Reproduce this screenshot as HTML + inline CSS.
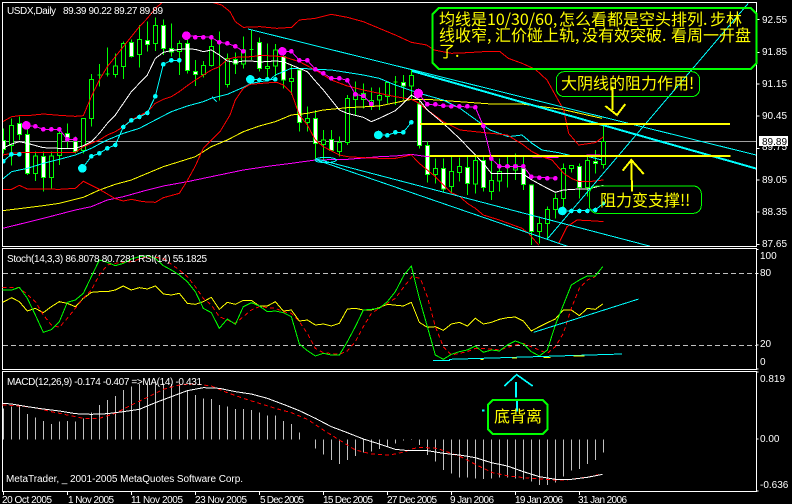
<!DOCTYPE html>
<html><head><meta charset="utf-8">
<style>
html,body{margin:0;padding:0;background:#000;width:792px;height:504px;overflow:hidden}
svg{position:absolute;left:0;top:0;display:block}
circle{stroke:none}
text{font-family:"Liberation Sans",sans-serif;font-size:10px;fill:#fff}
.c{position:absolute;white-space:pre;font-family:"WenQuanYi Zen Hei","Noto Sans CJK SC",sans-serif;font-size:16px;line-height:16px;color:#ff0;text-rendering:optimizeSpeed;font-weight:normal}
</style></head><body>
<svg width="792" height="504" viewBox="0 0 2376 1512" shape-rendering="crispEdges" fill="none" stroke-width="3">
<defs>
<clipPath id="m"><rect x="9" y="9" width="2259" height="729"/></clipPath>
</defs>
<rect width="2376" height="1512" fill="#000"/>
<!-- frames -->
<path stroke="#fff" d="M7.5 7.5H2269.5V739.5H7.5ZM7.5 745.5H2269.5V1108.5H7.5ZM7.5 1114.5H2269.5V1474.5H7.5Z"/>
<path stroke="#fff" d="M2270 58.5h9M2270 157.5h9M2270 252.5h9M2270 348.5h9M2270 445.5h9M2270 540.5h9M2270 635.5h9M2270 733.5h9M2270 748.5h6M2270 820.5h6M2270 1035.5h6M2270 1107.5h6M2270 1116.5h6M2270 1316.5h6M2270 1472.5h6"/>
<path stroke="#fff" d="M10.5 1476v9M202.5 1476v9M394.5 1476v9M586.5 1476v9M778.5 1476v9M970.5 1476v9M1162.5 1476v9M1354.5 1476v9M1546.5 1476v9M1738.5 1476v9"/>
<path stroke="#a0a0a0" d="M9 424.5H2268"/>
<path stroke="#c0c0c0" stroke-dasharray="15 9" d="M9 820.5H2268M9 1036.5H2268"/>

<g clip-path="url(#m)">
<!-- candles group 1 -->
<g stroke="#0f0">
<path d="M10.5 385V460M34.5 355V497M58.5 350V420M82.5 375V525M106.5 455V543M130.5 455V575M154.5 455V567M178.5 395V495M202.5 370V445M226.5 410V460M250.5 355V460M274.5 222V380M298.5 192V260M292.5 224.5h12M322.5 142V230M316.5 221.5h12M346.5 160V233M370.5 125V237M394.5 118V173M418.5 75V203M442.5 65V155M466.5 52V153M490.5 58V165M514.5 70V170M538.5 122V225M562.5 118V220M586.5 180V258M610.5 183V233M634.5 112V200M658.5 95V302M682.5 160V263M706.5 158V222M730.5 110V205M754.5 92V180M748.5 148.5h12M778.5 112V215M802.5 130V235"/>
<path fill="#000" d="M28.5 376h12V436h-12zM100.5 468h12V520h-12zM148.5 468h12V532h-12zM172.5 400h12V466h-12zM244.5 355h12V452h-12zM268.5 238h12V355h-12zM340.5 198h12V224h-12zM364.5 130h12V200h-12zM412.5 118h12V163h-12zM460.5 76h12V130h-12zM532.5 130h12V155h-12zM604.5 196h12V223h-12zM628.5 140h12V197h-12zM676.5 175h12V253h-12zM724.5 150h12V192h-12zM796.5 199h12V205h-12z"/>
<path fill="#fff" d="M4.5 421h12V448h-12zM52.5 370h12V403h-12zM76.5 403h12V520h-12zM124.5 470h12V532h-12zM196.5 400h12V412h-12zM220.5 425h12V455h-12zM388.5 127h12V170h-12zM436.5 122h12V133h-12zM484.5 76h12V146h-12zM508.5 146h12V156h-12zM556.5 130h12V212h-12zM580.5 214h12V223h-12zM700.5 178h12V192h-12zM772.5 127h12V205h-12z"/>
</g>
<!-- candles group 2 -->
<g stroke="#0f0" transform="translate(780 0)">
<path d="M46.5 132V230M70.5 145V265M94.5 195V285M118.5 205V395M142.5 320V395M166.5 330V478M190.5 390V480M214.5 390V455M238.5 410V470M262.5 285V435M286.5 245V345M310.5 250V325M334.5 262V330M358.5 262V330M382.5 245V310M406.5 228V315M400.5 245.5h12M430.5 225V300M454.5 210V300M478.5 300V445M502.5 425V548M526.5 475V550M550.5 475V575M574.5 465V580M598.5 472V545M622.5 470V585M646.5 465V580M670.5 470V575M694.5 470V600M718.5 475V575M742.5 470V562M766.5 460V540M790.5 465V570"/>
<path fill="#000" d="M40.5 150h12V198h-12zM88.5 235h12V245h-12zM136.5 355h12V367h-12zM184.5 420h12V433h-12zM232.5 427h12V455h-12zM256.5 295h12V427h-12zM280.5 280h12V298h-12zM304.5 280h12V298h-12zM328.5 302h12V318h-12zM352.5 286h12V300h-12zM376.5 247h12V290h-12zM448.5 226h12V258h-12zM520.5 505h12V523h-12zM568.5 514h12V560h-12zM592.5 500h12V517h-12zM640.5 481h12V552h-12zM688.5 542h12V574h-12zM712.5 515h12V543h-12zM760.5 495h12V510h-12z"/>
<path fill="#fff" d="M64.5 170h12V240h-12zM112.5 210h12V367h-12zM160.5 355h12V430h-12zM208.5 418h12V452h-12zM424.5 247h12V258h-12zM472.5 312h12V437h-12zM496.5 436h12V523h-12zM544.5 505h12V567h-12zM616.5 503h12V550h-12zM664.5 481h12V562h-12zM736.5 497h12V503h-12zM784.5 505h12V553h-12z"/>
</g>
<!-- candles group 3 -->
<g stroke="#0f0" transform="translate(1566 0)">
<path d="M28.5 555V735M52.5 650V730M76.5 620V715M100.5 580V655M124.5 490V625M148.5 495V518M172.5 490V595M196.5 470V590M220.5 450V520M244.5 375V505"/>
<path fill="#000" d="M46.5 670h12V695h-12zM70.5 628h12V670h-12zM94.5 595h12V628h-12zM118.5 505h12V595h-12zM142.5 497h12V505h-12zM190.5 482h12V563h-12zM238.5 425h12V493h-12z"/>
<path fill="#fff" d="M22.5 555h12V695h-12zM166.5 500h12V563h-12zM214.5 485h12V490h-12z"/>
</g>

<!-- magenta MA -->
<polyline stroke="#f0f" points="8,685 130,655 226,630 274,620 322,600 370,590 442,570 490,558 562,545 634,530 730,510 810,498 874,490 946,480 1042,478 1138,470 1186,468 1234,463 1282,470 1590,470 1676,473"/>
<path stroke="#f0f" d="M1760 465h40"/>
<!-- yellow MA -->
<polyline stroke="#ff0" points="8,632 82,623 130,617 178,610 250,592 298,570 346,553 394,540 442,520 490,500 538,485 586,470 634,440 682,420 730,395 778,378 826,365 874,345 922,340 970,330 1042,323 1138,318 1234,298 1282,298 1378,305 1474,312 1566,312 1686,328 1806,355"/>
<!-- cyan MA -->
<polyline stroke="#0ff" points="8,537 35,515 82,505 130,490 178,478 226,465 274,445 298,432 322,420 370,400 418,385 466,360 514,335 562,318 610,305 634,295 682,283 730,262 754,250 810,240 826,225 874,205 898,205 994,210 1090,225 1138,235 1186,255 1258,280 1330,300 1380,325 1470,390 1525,410 1566,405 1596,430 1626,450 1676,458 1726,470 1766,470 1806,480"/>
<path stroke="#0ff" d="M636 290l14 15"/>
<!-- red BB -->
<g stroke="#f00">
<polyline points="8,365 35,350 58,347 82,347 130,342 178,346 226,349 250,347 274,290 298,240 322,200 346,170 370,140 394,110 418,80 442,55 466,25 490,5 500,-5"/>
<polyline points="640,8 665,15 690,35 706,65 730,82 780,80 830,85 875,82 898,60 946,55 994,43 1042,52 1090,65 1138,85 1186,105 1234,127 1280,135 1302,150 1354,160 1402,158 1450,155 1500,155 1525,175 1566,190 1606,208 1641,240 1666,285 1691,330 1706,400 1736,435 1786,428 1811,410"/>
<polyline points="8,568 35,568 58,556 82,567 130,567 178,568 226,565 250,544 298,568 346,596 370,603 394,598 430,605 466,607 490,593 538,580 560,545 585,500 610,445 634,420 660,395 690,345 706,300 730,265 750,253 810,248 830,247 850,255 875,280 898,345 922,375 946,420 970,440 1018,465 1042,470 1090,473 1138,475 1186,475 1234,465 1258,490 1282,510 1306,530 1354,578 1380,590 1402,610 1426,625 1450,645 1498,660 1566,685 1586,700 1616,735"/>
<polyline points="1676,730 1701,680 1731,660 1786,663 1811,665"/>
<polyline points="8,465 35,460 82,457 130,457 226,457 250,440 298,420 322,405 346,395 370,380 394,360 442,335 466,310 490,298 514,290 538,275 562,257 586,240 610,225 634,210 658,200 682,178 706,172 754,170 778,167 802,167 850,170 898,185 946,210 970,225 994,240 1042,258 1090,270 1138,280 1186,290 1234,298 1258,310 1282,330 1330,365 1380,390 1426,395 1474,400 1522,405 1566,432 1596,455 1626,470 1656,480 1691,520 1714,535 1738,545 1766,545 1810,540"/>
</g>
<!-- white MA -->
<polyline stroke="#fff" points="8,445 35,432 58,425 82,430 130,443 178,445 226,445 250,437 274,425 298,400 322,370 346,345 370,310 394,275 442,225 466,175 490,157 514,152 538,148 562,147 586,148 610,155 634,150 658,165 682,183 706,187 730,183 754,183 778,186 826,183 850,185 898,205 922,215 946,243 970,270 994,300 1018,330 1042,340 1090,352 1114,365 1138,355 1186,332 1210,310 1234,285 1258,300 1282,330 1330,370 1378,415 1426,465 1450,490 1474,520 1522,520 1566,520 1596,540 1642,565 1666,577 1690,570 1738,567 1762,567 1810,556"/>
<!-- trend lines -->
<g stroke="#0ff">
<path d="M744 87L2280 468"/>
<path stroke-width="6" d="M1236 213L2372 535"/>
<path d="M950 477L2070 770M950 480L1752 756M1641 718L2245 10"/>
<ellipse cx="977" cy="480" rx="32" ry="8"/>
</g>
<!-- yellow levels -->
<path stroke="#ff0" stroke-width="6" d="M1260 372H2190M1288 468H2192"/>
<!-- dots -->
<g stroke="#0ff" fill="#0ff">
<polyline fill="none" points="247,505 274,469 298,460 322,445 346,435 370,381 394,361 418,351 442,339 466,289 490,193 514,181 538,181"/>
<circle cx="10" cy="484" r="7"/><circle cx="34" cy="463" r="7"/><circle cx="58" cy="463" r="7"/>
<path fill="none" d="M10 484L34 463H58M751 238H826"/>
<circle cx="247" cy="505" r="13"/><circle cx="274" cy="469" r="7"/><circle cx="298" cy="460" r="7"/><circle cx="322" cy="445" r="7"/><circle cx="346" cy="435" r="7"/><circle cx="370" cy="381" r="7"/><circle cx="394" cy="361" r="7"/><circle cx="418" cy="351" r="7"/><circle cx="442" cy="339" r="7"/><circle cx="466" cy="289" r="7"/><circle cx="490" cy="193" r="7"/><circle cx="514" cy="181" r="7"/><circle cx="538" cy="181" r="7"/>
<circle cx="751" cy="238" r="13"/><circle cx="778" cy="240" r="7"/><circle cx="802" cy="238" r="7"/><circle cx="826" cy="238" r="7"/>
<polyline fill="none" points="1135,405 1162,406 1186,397 1210,397 1234,367"/>
<circle cx="1135" cy="405" r="13"/><circle cx="1162" cy="406" r="7"/><circle cx="1186" cy="397" r="7"/><circle cx="1210" cy="397" r="7"/><circle cx="1234" cy="367" r="7"/>
<polyline fill="none" points="1687,633 1786,630 1810,610"/>
<circle cx="1687" cy="633" r="13"/><circle cx="1714" cy="633" r="7"/><circle cx="1738" cy="633" r="7"/><circle cx="1762" cy="633" r="7"/><circle cx="1786" cy="630" r="7"/><circle cx="1810" cy="610" r="6"/>
</g>
<g stroke="#f0f" fill="#f0f">
<polyline fill="none" points="79,376 106,379 130,388 178,388 202,418 226,418"/>
<circle cx="79" cy="376" r="13"/><circle cx="106" cy="379" r="7"/><circle cx="130" cy="388" r="7"/><circle cx="154" cy="388" r="7"/><circle cx="178" cy="388" r="7"/><circle cx="202" cy="418" r="7"/><circle cx="226" cy="418" r="7"/>
<polyline fill="none" points="559,107 634,112 658,127 682,130 706,139 730,154"/>
<circle cx="559" cy="107" r="13"/><circle cx="586" cy="112" r="7"/><circle cx="610" cy="112" r="7"/><circle cx="634" cy="112" r="7"/><circle cx="658" cy="127" r="7"/><circle cx="682" cy="130" r="7"/><circle cx="706" cy="139" r="7"/><circle cx="730" cy="154" r="7"/>
<polyline fill="none" points="847,154 874,154 898,181 922,181 946,208 970,220 994,235 1018,235 1042,241 1066,283 1090,288 1114,312"/>
<circle cx="847" cy="154" r="13"/><circle cx="874" cy="154" r="7"/><circle cx="898" cy="181" r="7"/><circle cx="922" cy="181" r="7"/><circle cx="946" cy="208" r="7"/><circle cx="970" cy="220" r="7"/><circle cx="994" cy="235" r="7"/><circle cx="1018" cy="235" r="7"/><circle cx="1042" cy="241" r="7"/><circle cx="1066" cy="283" r="7"/><circle cx="1090" cy="288" r="7"/><circle cx="1114" cy="312" r="7"/>
<polyline fill="none" points="1255,280 1282,313 1330,317 1426,322 1450,378 1474,476 1498,499 1570,499 1594,530 1666,535"/>
<circle cx="1255" cy="280" r="14"/><circle cx="1282" cy="313" r="7"/><circle cx="1306" cy="313" r="7"/><circle cx="1330" cy="317" r="7"/><circle cx="1354" cy="319" r="7"/><circle cx="1378" cy="319" r="7"/><circle cx="1402" cy="319" r="7"/><circle cx="1426" cy="322" r="7"/><circle cx="1450" cy="378" r="7"/><circle cx="1474" cy="476" r="7"/><circle cx="1498" cy="499" r="7"/><circle cx="1522" cy="499" r="7"/><circle cx="1546" cy="499" r="7"/><circle cx="1570" cy="499" r="7"/>
<circle cx="1594" cy="530" r="7"/><circle cx="1618" cy="533" r="7"/><circle cx="1642" cy="535" r="7"/><circle cx="1666" cy="535" r="7"/>
</g>
</g>

<!-- annotation boxes -->
<path stroke="#0f0" stroke-width="6" d="M1316 24H2252L2270 42V189L2252 207H1316L1298 189V42Z"/>
<g transform="translate(1566 0)">
<rect x="103" y="215" width="430" height="75" rx="24" stroke="#0f0"/>
<rect x="202" y="558" width="336" height="82" rx="24" stroke="#0f0"/>
<path stroke="#ff0" stroke-width="6" d="M272 260V330M250 318L285 345L310 312"/>
<path stroke="#ff0" stroke-width="6" d="M302 512L328 480L365 522M328 480L330 575"/>
</g>

<!-- stochastic -->
<g transform="translate(0 735)">
<polyline stroke="#ff0" points="8,172 35,158 58,170 82,198 106,190 130,203 154,185 178,170 202,175 226,185 250,160 274,142 298,140 322,140 346,135 370,123 394,135 418,128 442,132 466,123 490,147 514,150 538,145 562,175 586,178 610,170 634,157 658,193 682,172 706,178 730,166 754,166 778,183 802,183 826,170 850,198 874,195 898,228 922,225 946,240 970,237 994,243 1018,235 1042,192 1066,190 1090,195 1114,195 1138,188 1162,178 1210,183 1234,172 1258,232 1282,247 1306,245 1330,256 1354,237 1378,232 1402,243 1426,220 1450,237 1474,232 1498,223 1522,218 1546,216 1570,228 1594,258 1618,245 1642,233 1666,222 1690,195 1714,195 1738,212 1762,190 1786,193 1808,177"/>
<polyline stroke="#f00" stroke-dasharray="12 9" points="8,128 58,128 106,170 130,210 154,240 178,247 202,220 226,190 250,160 274,135 298,90 322,60 346,55 394,50 442,35 490,40 538,75 562,95 586,125 610,160 634,180 658,215 682,225 706,235 730,215 754,195 778,185 826,190 850,200 874,205 898,230 922,265 946,310 970,323 1018,328 1042,318 1066,290 1090,245 1114,205 1138,190 1162,175 1186,160 1212,125 1236,95 1261,100 1282,155 1306,245 1330,305 1354,330 1402,320 1426,310 1474,312 1498,315 1546,300 1570,295 1594,305 1618,315 1642,325 1666,305 1690,265 1714,190 1738,130 1762,105 1786,95"/>
<polyline stroke="#0f0" points="8,135 35,135 58,127 82,160 106,210 130,262 154,254 178,230 202,172 226,165 250,145 274,95 298,45 322,52 346,62 370,55 394,42 418,35 442,32 466,40 490,62 514,75 538,90 562,110 586,140 610,190 634,203 658,250 682,222 706,238 730,185 754,173 778,183 802,200 826,198 850,203 874,215 898,297 922,317 946,333 970,325 994,330 1018,330 1042,290 1066,245 1090,195 1114,193 1138,190 1162,170 1186,140 1212,90 1234,63 1258,160 1282,245 1306,330 1330,343 1354,328 1378,320 1402,315 1426,303 1450,322 1474,315 1498,318 1522,300 1546,288 1570,297 1594,320 1618,333 1642,315 1666,240 1690,180 1714,120 1738,105 1762,93 1786,93 1808,65"/>
<path stroke="#0ff" d="M1601 262L1916 162M1299 346H1348V343L1866 327"/>
<path stroke="#ff0" d="M1441 343h10M1536 339h15M1631 337h20M1721 333h33"/>
</g>

<!-- MACD -->
<g transform="translate(0 1110)">
<path stroke="#c0c0c0" d="M10.5 208V115M34.5 208V110M58.5 208V108M82.5 208V132M106.5 208V143M130.5 208V153M154.5 208V162M178.5 208V155M202.5 208V153M226.5 208V155M250.5 208V145M274.5 208V127M298.5 208V105M322.5 208V90M346.5 208V78M370.5 208V60M394.5 208V50M418.5 208V42M442.5 208V40M466.5 208V40M490.5 208V40M514.5 208V42M538.5 208V45M562.5 208V60M586.5 208V75M610.5 208V85M634.5 208V87M658.5 208V105M682.5 208V110M706.5 208V117M730.5 208V117M754.5 208V120M778.5 208V127M802.5 208V137M826.5 208V137M850.5 208V153M874.5 208V162M898.5 208V188M946.5 208V235M970.5 208V253M994.5 208V270M1018.5 208V282M1042.5 208V270M1066.5 208V258M1090.5 208V247M1114.5 208V245M1138.5 208V237M1162.5 208V230M1186.5 208V220M1210.5 208V212M1234.5 208V210M1258.5 208V225M1282.5 208V255M1306.5 208V275M1330.5 208V300M1354.5 208V310M1378.5 208V322M1402.5 208V323M1426.5 208V325M1450.5 208V327M1474.5 208V325M1498.5 208V322M1522.5 208V322M1546.5 208V325M1570.5 208V328M1594.5 208V335M1618.5 208V345M1642.5 208V345M1666.5 208V338M1690.5 208V320M1714.5 208V302M1738.5 208V297M1762.5 208V282M1786.5 208V270M1810.5 208V248"/>
<polyline stroke="#f00" stroke-dasharray="12 9" points="8,105 58,108 106,113 154,125 202,135 250,145 298,145 346,130 394,105 442,82 490,58 538,45 586,42 634,48 682,68 730,85 778,100 826,115 874,128 922,148 970,180 1018,210 1066,240 1114,252 1162,255 1186,252 1216,245 1238,236 1262,232 1310,235 1334,243 1382,260 1430,285 1478,308 1526,318 1574,323 1622,327 1670,330 1698,330 1770,320 1796,314"/>
<polyline stroke="#fff" points="8,100 35,102 82,110 130,117 178,123 226,131 274,133 322,131 370,125 418,118 466,98 514,80 562,62 610,53 658,55 706,65 754,72 802,85 850,103 898,122 946,145 994,170 1042,188 1090,207 1138,222 1186,238 1226,242 1282,242 1330,250 1378,255 1426,263 1474,278 1522,288 1570,305 1618,320 1666,328 1714,328 1762,322 1808,313"/>
<!-- cyan arrow -->
<g transform="translate(1176 0)">
<path stroke="#0ff" stroke-width="5" d="M337 48L374 14L422 48M372 36V82"/>
<path stroke="#0ff" stroke-width="6" d="M375 88V125M270 122h8"/>
<path stroke="#0f0" stroke-width="6" d="M302 90H452L466 104V178L452 192H302L288 178V104Z"/>
</g>
</g>
</svg>

<svg width="792" height="504" viewBox="0 0 792 504">
<text x="7" y="14" textLength="49" lengthAdjust="spacing">USDX,Daily</text>
<text x="63" y="14" textLength="100" lengthAdjust="spacing">89.39 90.22 89.27 89.89</text>
<text x="7" y="262" textLength="200" lengthAdjust="spacing">Stoch(14,3,3) 86.8078 80.7281  RSI(14) 55.1825</text>
<text x="7" y="385" textLength="195" lengthAdjust="spacing">MACD(12,26,9) -0.174 -0.407  =&gt;MA(14) -0.431</text>
<text x="6" y="482" textLength="237" lengthAdjust="spacing">MetaTrader, _ 2001-2005 MetaQuotes Software Corp.</text>

<text x="762" y="23">92.55</text>
<text x="762" y="55">91.85</text>
<text x="762" y="87">91.15</text>
<text x="762" y="119">90.45</text>
<text x="762" y="150">89.75</text>
<text x="762" y="183">89.05</text>
<text x="762" y="215">88.35</text>
<text x="762" y="247">87.65</text>
<rect x="759" y="136" width="29" height="10" fill="#fff"/>
<text x="762" y="145" style="fill:#000">89.89</text>
<text x="760" y="259">100</text>
<text x="760" y="276">80</text>
<text x="760" y="347">20</text>
<text x="760" y="365">0</text>
<text x="760" y="382">0.819</text>
<text x="760" y="442">0.00</text>
<text x="760" y="488">-0.636</text>

<text x="2" y="503" textLength="50" lengthAdjust="spacing">20 Oct 2005</text>
<text x="68" y="503" textLength="46" lengthAdjust="spacing">1 Nov 2005</text>
<text x="131" y="503" textLength="52" lengthAdjust="spacing">11 Nov 2005</text>
<text x="195" y="503" textLength="52" lengthAdjust="spacing">23 Nov 2005</text>
<text x="260" y="503" textLength="44" lengthAdjust="spacing">5 Dec 2005</text>
<text x="323" y="503" textLength="50" lengthAdjust="spacing">15 Dec 2005</text>
<text x="387" y="503" textLength="50" lengthAdjust="spacing">27 Dec 2005</text>
<text x="450" y="503" textLength="44" lengthAdjust="spacing">9 Jan 2006</text>
<text x="515" y="503" textLength="48" lengthAdjust="spacing">19 Jan 2006</text>
<text x="578" y="503" textLength="49" lengthAdjust="spacing">31 Jan 2006</text>
</svg>

<div class="c" style="left:439px;top:10px">均线是</div>
<div class="c" style="left:487px;top:10px">10/30/60,</div>
<div class="c" style="left:559px;top:10px">怎么看都是空头排列.</div>
<div class="c" style="left:710px;top:10px">步林</div>
<div class="c" style="left:439px;top:26px">线收窄,</div>
<div class="c" style="left:495px;top:26px">汇价碰上轨,</div>
<div class="c" style="left:582px;top:26px">没有效突破.</div>
<div class="c" style="left:671px;top:26px">看周一开盘</div>
<div class="c" style="left:439px;top:42px">了.</div>
<div class="c" style="left:561px;top:74px">大阴线的阻力作用!</div>
<div class="c" style="left:600px;top:191px">阻力变支撑!!</div>
<div class="c" style="left:494px;top:407px">底背离</div>
</body></html>
